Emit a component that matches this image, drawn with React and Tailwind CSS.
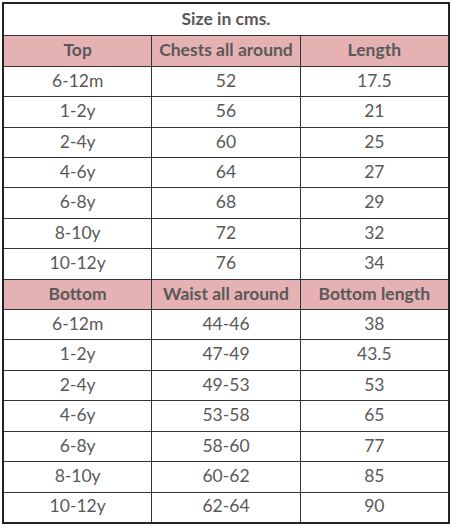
const top = [
    ['6-12m', '52', '17.5'],
    ['1-2y', '56', '21'],
    ['2-4y', '60', '25'],
    ['4-6y', '64', '27'],
    ['6-8y', '68', '29'],
    ['8-10y', '72', '32'],
    ['10-12y', '76', '34'],
];

const bottom = [
    ['6-12m', '44-46', '38'],
    ['1-2y', '47-49', '43.5'],
    ['2-4y', '49-53', '53'],
    ['4-6y', '53-58', '65'],
    ['6-8y', '58-60', '77'],
    ['8-10y', '60-62', '85'],
    ['10-12y', '62-64', '90'],
];

const Row = ({ cells, head }) => (
    <div className={`flex-1 flex border-t border-[#333] ${head ? 'bg-[#e6b1b3] font-bold' : 'bg-white'}`}>
        {cells.map((c, i) => (
            <div
                key={i}
                className={`flex-1 flex items-center justify-center pb-[2px] ${i > 0 ? 'border-l border-[#333]' : ''}`}
            >
                {c}
            </div>
        ))}
    </div>
);

const App = () => {
    return (
        <div className="w-[452px] h-[529px] bg-white pt-[2px] pl-[2px]">
            <div
                className="w-[448px] h-[522px] border-2 border-[#222] flex flex-col text-[17.5px] leading-none text-[#595959]"
                style={{ fontFamily: 'Lato, "Open Sans", sans-serif' }}
            >
                <div className="flex-1 flex items-center justify-center pb-[2px] font-bold">Size in cms.</div>
                <Row head cells={['Top', 'Chests all around', 'Length']} />
                {top.map((r) => (
                    <Row key={'t' + r[0]} cells={r} />
                ))}
                <Row head cells={['Bottom', 'Waist all around', 'Bottom length']} />
                {bottom.map((r) => (
                    <Row key={'b' + r[0]} cells={r} />
                ))}
            </div>
        </div>
    );
};

export default App;
